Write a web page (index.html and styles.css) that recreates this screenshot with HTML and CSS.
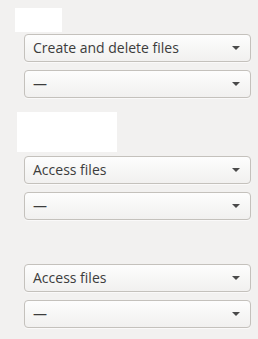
FILE: index.html
```html
<!DOCTYPE html>
<html>
<head>
<meta charset="utf-8">
<link rel="stylesheet" href="styles.css">
</head>
<body>
<div class="page">
  <section class="group g1">
    <div class="label small"></div>
    <div class="combos">
      <div class="combo"><span class="text">Create and delete files</span><span class="arrow"></span></div>
      <div class="combo"><span class="text">—</span><span class="arrow"></span></div>
    </div>
  </section>
  <section class="group g2">
    <div class="label wide"></div>
    <div class="combos">
      <div class="combo"><span class="text">Access files</span><span class="arrow"></span></div>
      <div class="combo"><span class="text">—</span><span class="arrow"></span></div>
    </div>
  </section>
  <section class="group g3">
    <div class="combos">
      <div class="combo"><span class="text">Access files</span><span class="arrow"></span></div>
      <div class="combo"><span class="text">—</span><span class="arrow"></span></div>
    </div>
  </section>
</div>
</body>
</html>
```
FILE: styles.css
```css
html, body {
  margin: 0;
  padding: 0;
  background: #f2f1f0;
}
.page {
  width: 258px;
  height: 339px;
  box-sizing: border-box;
  padding: 8px 7px 0 15px;
  display: flex;
  flex-direction: column;
  font-family: "Open Sans", "DejaVu Sans", sans-serif;
  font-size: 14px;
  color: #3c3c3c;
}
.group {
  display: flex;
  flex-direction: column;
}
.label {
  background: #ffffff;
}
.label.small {
  width: 47px;
  height: 24px;
  margin-bottom: 2px;
}
.label.wide {
  width: 100px;
  height: 40px;
  margin-left: 2px;
  margin-bottom: 4px;
}
.g2 { margin-top: 14px; }
.g3 { margin-top: 44px; }
.combos {
  display: flex;
  flex-direction: column;
  gap: 8px;
  padding-left: 9px;
}
.combo {
  height: 28px;
  box-sizing: border-box;
  border: 1px solid #c4c1bc;
  border-radius: 4px;
  background: linear-gradient(#fdfdfd, #f1f0ef);
  box-shadow: 0 1px 0 rgba(255,255,255,0.6);
  display: flex;
  align-items: center;
  justify-content: space-between;
  padding: 0 10px 0 8px;
}
.text {
  line-height: 1;
}
.arrow {
  width: 0;
  height: 0;
  border-left: 4px solid transparent;
  border-right: 4px solid transparent;
  border-top: 4px solid #4a4a4a;
}
```
